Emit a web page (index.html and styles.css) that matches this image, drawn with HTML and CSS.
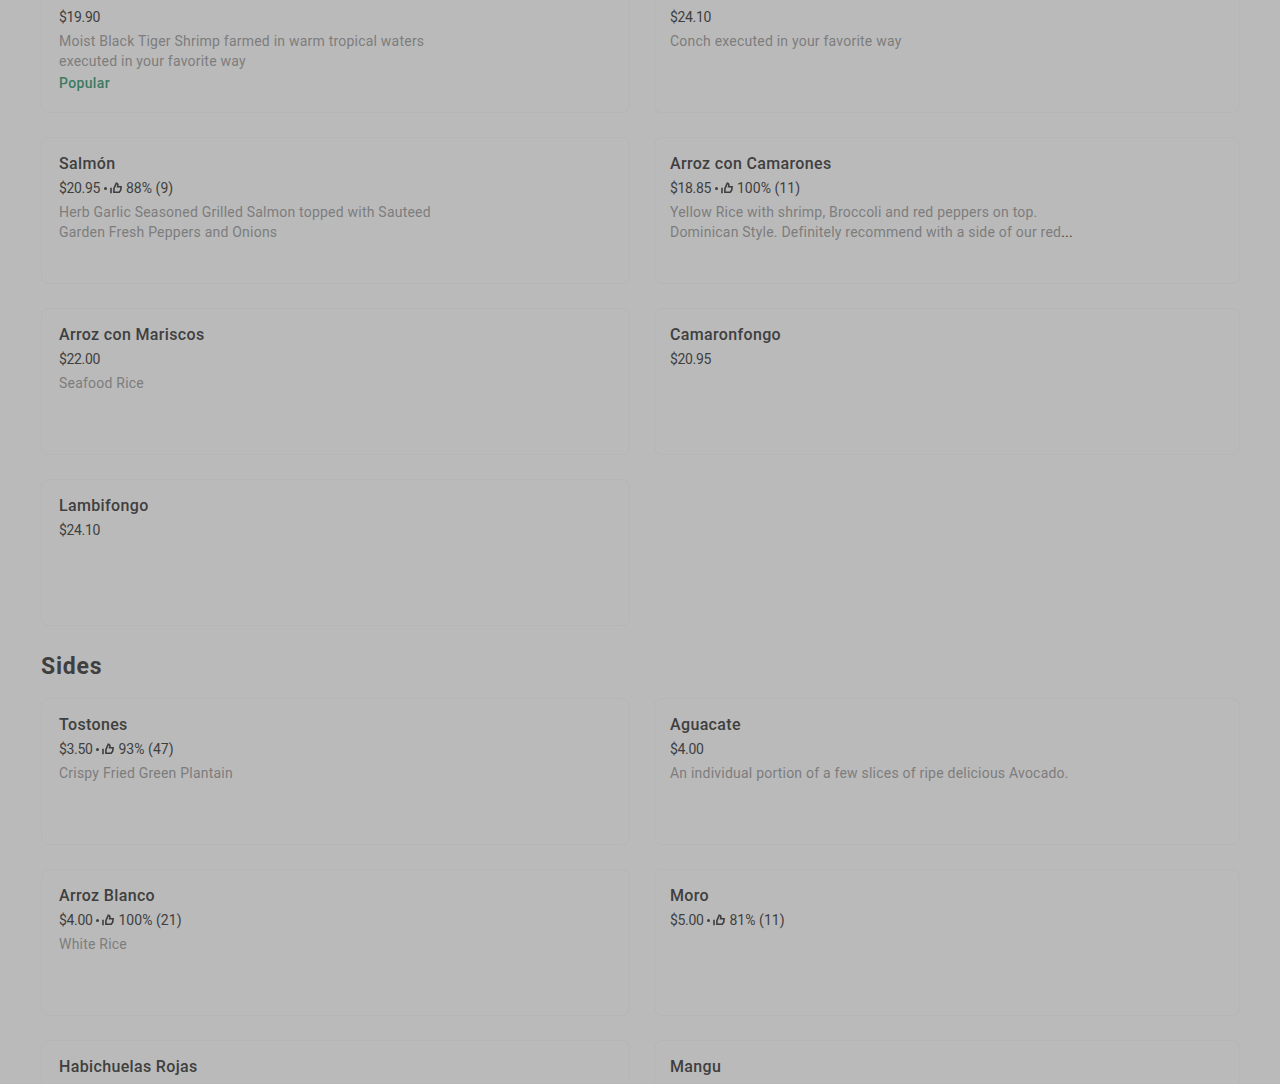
FILE: index.html
```
<!DOCTYPE html>
<html lang="en">
<head>
    <meta charset="UTF-8">
    <meta name="viewport" content="width=device-width, initial-scale=1.0">
    <title>Menu</title>
    <link rel="stylesheet" href="styles.css">
</head>
<body>
    <svg class="sprite" width="0" height="0">
        <symbol id="thumb" viewBox="0 0 12 12">
            <path d="M1 5.8v5.4" fill="none" stroke="currentColor" stroke-width="1.6"/>
            <path d="M3.9 6.6 6.3 1.2c1.2.2 1.8 1 1.6 2l-.3 1.5h3.5l-.4 3.4-1.5 2.2H3.9z" fill="none" stroke="currentColor" stroke-width="1.6"/>
        </symbol>
    </svg>

    <main class="menu">
        <ul class="items">
            <li class="item item-cut">
                <div class="price">$19.90</div>
                <p class="desc">Moist Black Tiger Shrimp farmed in warm tropical waters<br>executed in your favorite way</p>
                <div class="popular">Popular</div>
            </li>
            <li class="item item-cut">
                <div class="price">$24.10</div>
                <p class="desc">Conch executed in your favorite way</p>
            </li>
            <li class="item">
                <h3>Salmón</h3>
                <div class="price">$20.95 <span class="dot"></span><svg class="thumb"><use href="#thumb"/></svg><span class="rating">88% (9)</span></div>
                <p class="desc">Herb Garlic Seasoned Grilled Salmon topped with Sauteed<br>Garden Fresh Peppers and Onions</p>
            </li>
            <li class="item">
                <h3>Arroz con Camarones</h3>
                <div class="price">$18.85 <span class="dot"></span><svg class="thumb"><use href="#thumb"/></svg><span class="rating">100% (11)</span></div>
                <p class="desc">Yellow Rice with shrimp, Broccoli and red peppers on top.<br>Dominican Style. Definitely recommend with a side of our red<span class="more">...</span></p>
            </li>
            <li class="item">
                <h3>Arroz con Mariscos</h3>
                <div class="price">$22.00</div>
                <p class="desc">Seafood Rice</p>
            </li>
            <li class="item">
                <h3>Camaronfongo</h3>
                <div class="price">$20.95</div>
            </li>
            <li class="item">
                <h3>Lambifongo</h3>
                <div class="price">$24.10</div>
            </li>
        </ul>

        <h2>Sides</h2>
        <ul class="items sides">
            <li class="item">
                <h3>Tostones</h3>
                <div class="price">$3.50 <span class="dot"></span><svg class="thumb"><use href="#thumb"/></svg><span class="rating">93% (47)</span></div>
                <p class="desc">Crispy Fried Green Plantain</p>
            </li>
            <li class="item">
                <h3>Aguacate</h3>
                <div class="price">$4.00</div>
                <p class="desc">An individual portion of a few slices of ripe delicious Avocado.</p>
            </li>
            <li class="item">
                <h3>Arroz Blanco</h3>
                <div class="price">$4.00 <span class="dot"></span><svg class="thumb"><use href="#thumb"/></svg><span class="rating">100% (21)</span></div>
                <p class="desc">White Rice</p>
            </li>
            <li class="item">
                <h3>Moro</h3>
                <div class="price">$5.00 <span class="dot"></span><svg class="thumb"><use href="#thumb"/></svg><span class="rating">81% (11)</span></div>
            </li>
            <li class="item item-last">
                <h3>Habichuelas Rojas</h3>
            </li>
            <li class="item item-last">
                <h3>Mangu</h3>
            </li>
        </ul>
    </main>
</body>
</html>
```

FILE: styles.css
```
* {
    margin: 0;
    padding: 0;
    box-sizing: border-box;
}

body {
    background: #bababa;
    color: #3f3f3f;
    font-family: Roboto, "Liberation Sans", sans-serif;
    font-size: 14px;
    line-height: 20px;
}

.sprite {
    position: absolute;
}

.menu {
    padding: 0 40px 0 41px;
}

.items {
    display: grid;
    grid-template-columns: 589px 586px;
    grid-auto-rows: 147px;
    gap: 24px;
    list-style: none;
}

.items:first-child {
    grid-template-rows: 113px;
}

.sides {
    grid-template-rows: 147px 147px 44px;
}

.item {
    border: 1px solid #b6b6b6;
    border-radius: 8px;
    padding: 14px 16px 0 17px;
}

.item:nth-child(even) {
    padding-left: 15px;
}

.item-cut {
    border-top: 0;
    border-radius: 0 0 8px 8px;
    padding-top: 7px;
}

.item-last {
    border-bottom: 0;
    border-radius: 8px 8px 0 0;
}

h2 {
    margin: 24px 0 14px;
    font-size: 23px;
    font-weight: 700;
    line-height: 34px;
    letter-spacing: 0.8px;
}

h3 {
    font-size: 16px;
    font-weight: 500;
    line-height: 24px;
    letter-spacing: 0.35px;
}

.price {
    display: flex;
    align-items: center;
    height: 20px;
    margin-top: 2px;
    letter-spacing: -0.35px;
}

.item-cut .price {
    margin-top: 0;
}

.dot {
    width: 3px;
    height: 3px;
    margin: 1px 3px 0 4px;
    border-radius: 50%;
    background: #3f3f3f;
}

.thumb {
    width: 12px;
    height: 12px;
    margin-right: 4px;
}

.rating {
    letter-spacing: 0.05px;
}

.desc {
    margin-top: 4px;
    color: #7d7d7d;
    letter-spacing: 0.22px;
    white-space: nowrap;
}

.more {
    color: #3f3f3f;
}

.popular {
    margin-top: 2px;
    color: #3d7a62;
    font-weight: 500;
    letter-spacing: 0.35px;
}
```
